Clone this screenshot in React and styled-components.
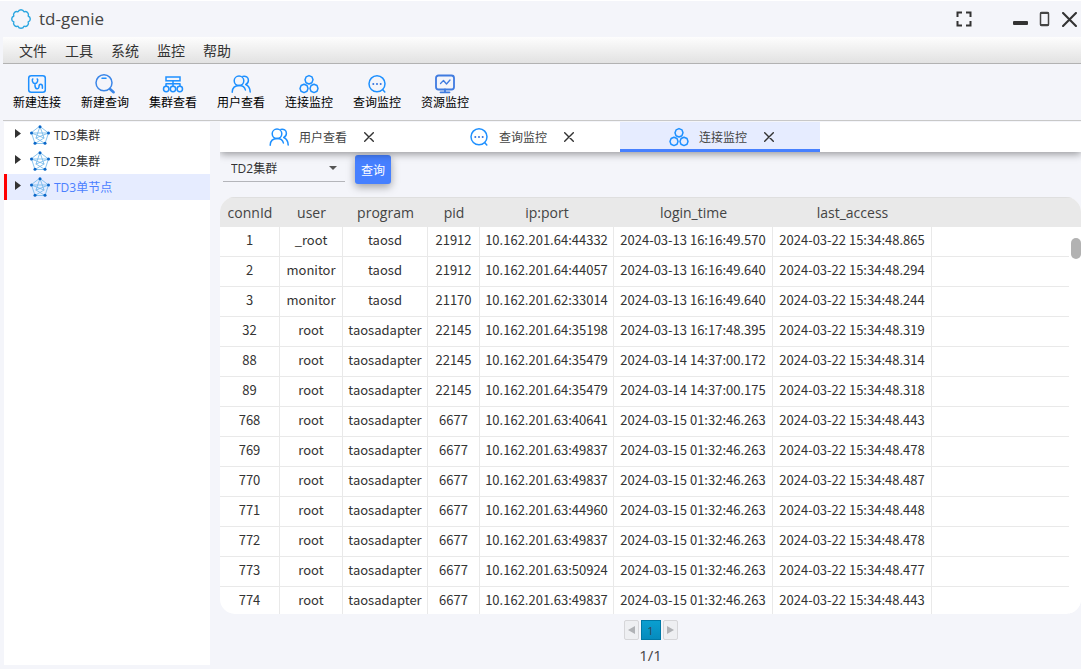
import React from "react";
import styled, { createGlobalStyle } from "styled-components";

const latin = '"Open Sans", "Noto Sans CJK SC", sans-serif';

const GlobalStyle = createGlobalStyle`
  * { box-sizing: border-box; }
  body {
    margin: 0;
    background: #f4f5fa;
    color: #333;
    font-family: ${latin};
    font-size: 13px;
  }
  button, select { font-family: inherit; }
`;

const Window = styled.div`
  display: flex;
  flex-direction: column;
  height: 100vh;
  overflow: hidden;
  border-top: 1px solid #fff;
`;

const TitleBar = styled.header`
  display: flex;
  align-items: center;
  flex: none;
  height: 36px;
  padding: 0 4px 0 11px;
`;

const Title = styled.h1`
  flex: 1;
  margin: 0 0 0 8px;
  font-size: 17px;
  line-height: 24px;
  font-weight: 400;
  color: #444;
`;

const IconButton = styled.button`
  display: flex;
  align-items: center;
  justify-content: center;
  width: 16px;
  height: 16px;
  padding: 0;
  border: 0;
  background: none;
  color: #333;
`;

const WindowControls = styled.div`
  display: flex;
  gap: 8px;
  margin-left: 41px;
`;

const MenuBar = styled.nav`
  display: flex;
  align-items: center;
  flex: none;
  gap: 18px;
  height: 27px;
  margin-left: 3px;
  padding: 2px 0 0 16px;
  border-bottom: 1px solid #b2b2b2;
  background: linear-gradient(#fdfdfd, #e2e2e2);
`;

const MenuButton = styled.button`
  padding: 0;
  border: 0;
  background: none;
  color: #333;
  font-size: 14px;
  line-height: 20px;
`;

const ToolBar = styled.div`
  display: flex;
  flex: none;
  height: 57px;
  margin-left: 3px;
  border-bottom: 1px solid #c8c8c8;
`;

const ToolButton = styled.button`
  display: flex;
  flex-direction: column;
  align-items: center;
  width: 68px;
  padding: 9px 0 0;
  border: 0;
  background: none;
  color: #000;
  font-size: 12px;
  line-height: 16px;
`;

const Body = styled.div`
  display: flex;
  flex: 1;
  gap: 10px;
  min-height: 0;
  padding: 1px 0 0 4px;
`;

const Tree = styled.aside`
  width: 206px;
  flex: none;
  margin-bottom: 4px;
  background: #fff;
`;

const TreeList = styled.ul`
  margin: 0;
  padding: 0;
  list-style: none;
`;

const TreeItem = styled.li`
  display: flex;
  align-items: center;
  height: 26px;
  padding-left: 8px;
  border-left: 3px solid ${(p) => (p.$selected ? "#f00" : "transparent")};
  background: ${(p) => (p.$selected ? "#e6ecff" : "transparent")};
  color: ${(p) => (p.$selected ? "#4b7fff" : "#333")};
`;

const Arrow = styled.svg`
  margin: 0 9px 4px 0;
`;

const TreeLabel = styled.span`
  margin-left: 4px;
  padding-top: 2px;
  font-size: 12px;
  line-height: 20px;
`;

const Main = styled.main`
  display: flex;
  flex: 1;
  flex-direction: column;
  min-width: 0;
`;

const TabBar = styled.div`
  display: flex;
  flex: none;
  height: 30px;
  background: #fff;
  box-shadow: 0 2px 8px rgba(0, 0, 0, 0.4);
  clip-path: inset(0 0 -12px 0);
`;

const Tab = styled.div`
  display: flex;
  align-items: center;
  justify-content: center;
  width: 200px;
  padding-left: 5px;
  border-bottom: ${(p) => (p.$active ? "3px solid #4680ff" : "0")};
  padding-bottom: ${(p) => (p.$active ? 0 : 3)}px;
  padding-top: 3px;
  background: ${(p) => (p.$active ? "#e6ecff" : "transparent")};
`;

const TabButton = styled.button`
  display: flex;
  align-items: center;
  gap: 9px;
  margin-right: 14px;
  padding: 0;
  border: 0;
  background: none;
  color: #444;
  font-size: 12px;
  line-height: 18px;
`;

const TabLabel = styled.span`
  padding-top: 2px;
`;

const Filter = styled.form`
  display: flex;
  align-items: flex-start;
  flex: none;
  gap: 10px;
  height: 45px;
  padding: 3px 3px 0;
`;

const SelectBox = styled.div`
  display: flex;
  align-items: center;
  width: 122px;
  height: 27px;
  padding-right: 8px;
  border-bottom: 1px solid #b4b5ba;
`;

const Select = styled.select`
  flex: 1;
  min-width: 0;
  height: 26px;
  padding: 0 0 0 8px;
  border: 0;
  appearance: none;
  background: none;
  color: #333;
  font-size: 12px;
`;

const QueryButton = styled.button`
  width: 36px;
  height: 29px;
  padding: 0;
  border: 0;
  border-radius: 3px;
  background: #4680ff;
  box-shadow: 0 3px 8px rgba(0, 0, 0, 0.35);
  color: #fff;
  font-size: 12px;
`;

const TableCard = styled.section`
  position: relative;
  flex: 1;
  min-height: 0;
  overflow: hidden;
  border-radius: 15px;
  background: #fff;
`;

const Table = styled.table`
  width: 100%;
  table-layout: fixed;
  border-spacing: 0;
  text-align: center;
`;

const Col = styled.col`
  width: ${(p) => p.$width}px;
`;

const Th = styled.th`
  height: 30px;
  padding: 0;
  border-top: 1px solid #dfdfdf;
  background: #e9e9e9;
  color: #444;
  font-size: 14px;
  line-height: 20px;
  font-weight: 400;
`;

const Td = styled.td`
  height: 30px;
  padding: 0 0 4px;
  border-right: 1px solid #e9e9e9;
  border-bottom: 1px solid #e9e9e9;
  font-family: "Noto Sans CJK SC", sans-serif;
  font-size: 13px;
  line-height: 20px;
  white-space: nowrap;
  &:last-child { border-right: 0; }
`;

const ScrollRail = styled.div`
  position: absolute;
  top: 30px;
  right: 0;
  bottom: 0;
  width: 12px;
  padding: 11px 0 0 2px;
  background: #fff;
`;

const ScrollThumb = styled.div`
  height: 21px;
  border-radius: 5px;
  background: #b2b2b2;
`;

const Footer = styled.footer`
  display: flex;
  flex: none;
  flex-direction: column;
  align-items: center;
  gap: 5px;
  height: 55px;
  padding-top: 6px;
  font-size: 15px;
  line-height: 20px;
  color: #444;
`;

const Pager = styled.div`
  display: flex;
  gap: 2px;
`;

const PageButton = styled.button`
  display: flex;
  align-items: center;
  justify-content: center;
  width: ${(p) => (p.$current ? 20 : 15)}px;
  height: 20px;
  padding: 0;
  border: 1px solid ${(p) => (p.$current ? "#0078a5" : "#d6d6d9")};
  border-radius: ${(p) => (p.$current ? 0 : 2)}px;
  background: ${(p) => (p.$current ? "linear-gradient(#0a9fd0, #068bbd)" : "#eeeff2")};
  color: #345;
  font-size: 11px;
`;

const BLUE = "#1e90ff";

const Svg = ({ size = 22, box = 22, children, color = BLUE, w = 1.5 }) => (
  <svg width={size} height={size} viewBox={`0 0 ${box} ${box}`} fill="none" stroke={color} strokeWidth={w} strokeLinecap="round" strokeLinejoin="round" aria-hidden="true">
    {children}
  </svg>
);

const ConnectIcon = () => (
  <Svg>
    <rect x="2.7" y="2.7" width="16.6" height="16.6" rx="2.5" />
    <path d="M6.8 6c-1 .6-.5 4.6 2.2 4.6s3.200-4 2.200-4.600M9 10.600v1.800c0 4.200 4 4.200 4 1.200 0-3.200 3.400-3.200 3.400 0v1.600" />
  </Svg>
);
const SearchIcon = () => (
  <Svg color="#3a86e8">
    <circle cx="10" cy="9.800" r="8" />
    <path d="M8 5.200h4" stroke={BLUE} />
    <path d="M16 16l3.600 3.200" strokeWidth="2.600" />
  </Svg>
);
const ClusterIcon = () => (
  <Svg>
    <rect x="4" y="4" width="14" height="3.800" strokeLinejoin="miter" />
    <path d="M11 8v5M4 13v-2.200h14V13" />
    <circle cx="4.200" cy="16" r="2.700" />
    <circle cx="11" cy="16" r="2.700" />
    <circle cx="17.800" cy="16" r="2.700" />
  </Svg>
);
const UsersIcon = () => (
  <Svg>
    <circle cx="9" cy="7.800" r="4.800" />
    <path d="M2.200 19.200c0-4.400 2.800-6.800 6.800-6.800s6 2.200 6.400 4.600M12.800 3.400c2.900-.8 5.600 1 5.600 3.800 0 2.200-1.100 3.600-2.700 4.300 3 1.100 4.300 3.800 4.500 7.500" />
  </Svg>
);
const HexIcon = () => (
  <Svg>
    <path d="M11 2.600l3 1.300 1 2.900-1.100 2.900L11 11l-3-1.300-1-2.900 1.100-2.900z" />
    <path d="M6 11.200l3 1.300 1 2.900-1 2.900-3 1.300-3-1.300-1-2.900 1.100-2.900z" />
    <path d="M16 11.200l3 1.300 1 2.900-1 2.900-3 1.300-3-1.300-1-2.900 1.100-2.900z" />
  </Svg>
);
const ChatIcon = () => (
  <Svg>
    <circle cx="11" cy="10.800" r="8" />
    <path d="M16.600 16.600l2.200 2.400" />
    <path d="M7.200 11h.2M10.900 11h.2M14.600 11h.2" stroke="#3a78e0" strokeWidth="1.800" />
  </Svg>
);
const MonitorIcon = () => (
  <Svg color="#3f7be0" w={1.8}>
    <rect x="2" y="2.500" width="18" height="14" rx="2.500" />
    <path d="M6.500 10.500l3-3 3 3.500 3.500-4" strokeWidth="1.300" />
    <path d="M11 16.500v2.500M6.500 19.300h9" />
  </Svg>
);
const ClusterNode = () => (
  <Svg size={20} box={20} color="#6db6ea" w={0.8}>
    <path d="M10 1.500L18.500 8l-3.500 10.500H5L1.500 8zM10 1.500L6 13l9 5.500M10 1.500L14 13l-9 5.500M1.500 8h17M1.500 8L14 13M18.500 8L6 13" />
    <g fill="#0a66c8" stroke="none">
      <circle cx="10" cy="1.700" r="1.500" />
      <circle cx="18.500" cy="8" r="1.500" />
      <circle cx="15" cy="18.300" r="1.500" />
      <circle cx="5" cy="18.300" r="1.500" />
      <circle cx="1.500" cy="8" r="1.500" />
    </g>
  </Svg>
);
const LogoIcon = () => (
  <Svg size={20} box={20} color="#2ba6e0" w={1.4}>
    <path d="M7 2.800A3.200 3.200 0 0 1 13 2.800A3.200 3.200 0 0 1 17.200 7A3.200 3.200 0 0 1 17.200 13A3.200 3.200 0 0 1 13 17.200A3.200 3.200 0 0 1 7 17.200A3.200 3.200 0 0 1 2.800 13A3.200 3.200 0 0 1 2.800 7A3.200 3.200 0 0 1 7 2.800z" />
  </Svg>
);
const CrossIcon = ({ size = 10 }) => (
  <Svg size={size} box={10} color="#333" w={1.4}>
    <path d="M.7.7l8.600 8.600M9.300.7L.7 9.300" />
  </Svg>
);
const Triangle = ({ points, width, height, fill }) => (
  <svg width={width} height={height} aria-hidden="true"><polygon points={points} fill={fill} /></svg>
);

const tools = [
  ["新建连接", ConnectIcon],
  ["新建查询", SearchIcon],
  ["集群查看", ClusterIcon],
  ["用户查看", UsersIcon],
  ["连接监控", HexIcon],
  ["查询监控", ChatIcon],
  ["资源监控", MonitorIcon],
];
const tabs = [
  ["用户查看", UsersIcon],
  ["查询监控", ChatIcon],
  ["连接监控", HexIcon],
];
const clusters = ["TD3集群", "TD2集群", "TD3单节点"];
const columns = [
  ["connId", 60], ["user", 63], ["program", 85], ["pid", 52],
  ["ip:port", 134], ["login_time", 159], ["last_access", 159],
];
const D = "2024-03-15 01:32:46.263";
const rows = [
  ["1", "_root", "taosd", "21912", "10.162.201.64:44332", "2024-03-13 16:16:49.570", "865"],
  ["2", "monitor", "taosd", "21912", "10.162.201.64:44057", "2024-03-13 16:16:49.640", "294"],
  ["3", "monitor", "taosd", "21170", "10.162.201.62:33014", "2024-03-13 16:16:49.640", "244"],
  ["32", "root", "taosadapter", "22145", "10.162.201.64:35198", "2024-03-13 16:17:48.395", "319"],
  ["88", "root", "taosadapter", "22145", "10.162.201.64:35479", "2024-03-14 14:37:00.172", "314"],
  ["89", "root", "taosadapter", "22145", "10.162.201.64:35479", "2024-03-14 14:37:00.175", "318"],
  ["768", "root", "taosadapter", "6677", "10.162.201.63:40641", D, "443"],
  ["769", "root", "taosadapter", "6677", "10.162.201.63:49837", D, "478"],
  ["770", "root", "taosadapter", "6677", "10.162.201.63:49837", D, "487"],
  ["771", "root", "taosadapter", "6677", "10.162.201.63:44960", D, "448"],
  ["772", "root", "taosadapter", "6677", "10.162.201.63:49837", D, "478"],
  ["773", "root", "taosadapter", "6677", "10.162.201.63:50924", D, "477"],
  ["774", "root", "taosadapter", "6677", "10.162.201.63:49837", D, "443"],
].map((r) => [...r.slice(0, 6), `2024-03-22 15:34:48.${r[6]}`]);

export default function App() {
  return (
    <Window>
      <GlobalStyle />
      <TitleBar>
        <LogoIcon />
        <Title>td-genie</Title>
        <IconButton aria-label="全屏">
          <svg width="16" height="16" fill="none" stroke="#333" strokeWidth="2"><path d="M1.500 6V1.500H6M10 1.500h4.500V6M14.500 10v4.500H10M6 14.500H1.500V10" /></svg>
        </IconButton>
        <WindowControls>
          <IconButton aria-label="最小化">
            <svg width="16" height="16"><rect x="0" y="10" width="15" height="4" rx="1" fill="#333" /></svg>
          </IconButton>
          <IconButton aria-label="最大化">
            <svg width="16" height="16" fill="none" stroke="#444"><rect x="3.500" y="1.500" width="8" height="13" rx="1" strokeWidth="1.500" /><path d="M3.500 2h8M3.500 14h8" strokeWidth="2" /></svg>
          </IconButton>
          <IconButton aria-label="关闭"><CrossIcon size={15} /></IconButton>
        </WindowControls>
      </TitleBar>
      <MenuBar>
        {["文件", "工具", "系统", "监控", "帮助"].map((m) => <MenuButton key={m}>{m}</MenuButton>)}
      </MenuBar>
      <ToolBar>
        {tools.map(([label, Icon]) => (
          <ToolButton key={label}><Icon />{label}</ToolButton>
        ))}
      </ToolBar>
      <Body>
        <Tree>
          <TreeList>
            {clusters.map((name, i) => (
              <TreeItem key={name} $selected={i === 2}>
                <Arrow width="6" height="9"><polygon points="0,0 6,4.500 0,9" fill="#333" /></Arrow>
                <ClusterNode />
                <TreeLabel>{name}</TreeLabel>
              </TreeItem>
            ))}
          </TreeList>
        </Tree>
        <Main>
          <TabBar>
            {tabs.map(([label, Icon], i) => (
              <Tab key={label} $active={i === 2}>
                <TabButton><Icon /><TabLabel>{label}</TabLabel></TabButton>
                <IconButton aria-label={`关闭${label}`}><CrossIcon /></IconButton>
              </Tab>
            ))}
          </TabBar>
          <Filter onSubmit={(e) => e.preventDefault()}>
            <SelectBox>
              <Select aria-label="集群" defaultValue="TD2集群">
                {clusters.map((c) => <option key={c}>{c}</option>)}
              </Select>
              <Triangle width={8} height={4} points="0,0 8,0 4,4" fill="#555" />
            </SelectBox>
            <QueryButton type="submit">查询</QueryButton>
          </Filter>
          <TableCard>
            <Table>
              <colgroup>
                {columns.map(([name, width]) => <Col key={name} $width={width} />)}
                <col />
              </colgroup>
              <thead>
                <tr>
                  {columns.map(([name]) => <Th key={name} scope="col">{name}</Th>)}
                  <Th as="td" />
                </tr>
              </thead>
              <tbody>
                {rows.map((row) => (
                  <tr key={row[0]}>
                    {row.map((cell, i) => <Td key={i}>{cell}</Td>)}
                    <Td />
                  </tr>
                ))}
              </tbody>
            </Table>
            <ScrollRail><ScrollThumb /></ScrollRail>
          </TableCard>
          <Footer>
            <Pager>
              <PageButton aria-label="上一页"><Triangle width={7} height={8} points="7,0 7,8 0,4" fill="#b0b2b6" /></PageButton>
              <PageButton $current>1</PageButton>
              <PageButton aria-label="下一页"><Triangle width={7} height={8} points="0,0 7,4 0,8" fill="#b0b2b6" /></PageButton>
            </Pager>
            <span>1/1</span>
          </Footer>
        </Main>
      </Body>
    </Window>
  );
}
